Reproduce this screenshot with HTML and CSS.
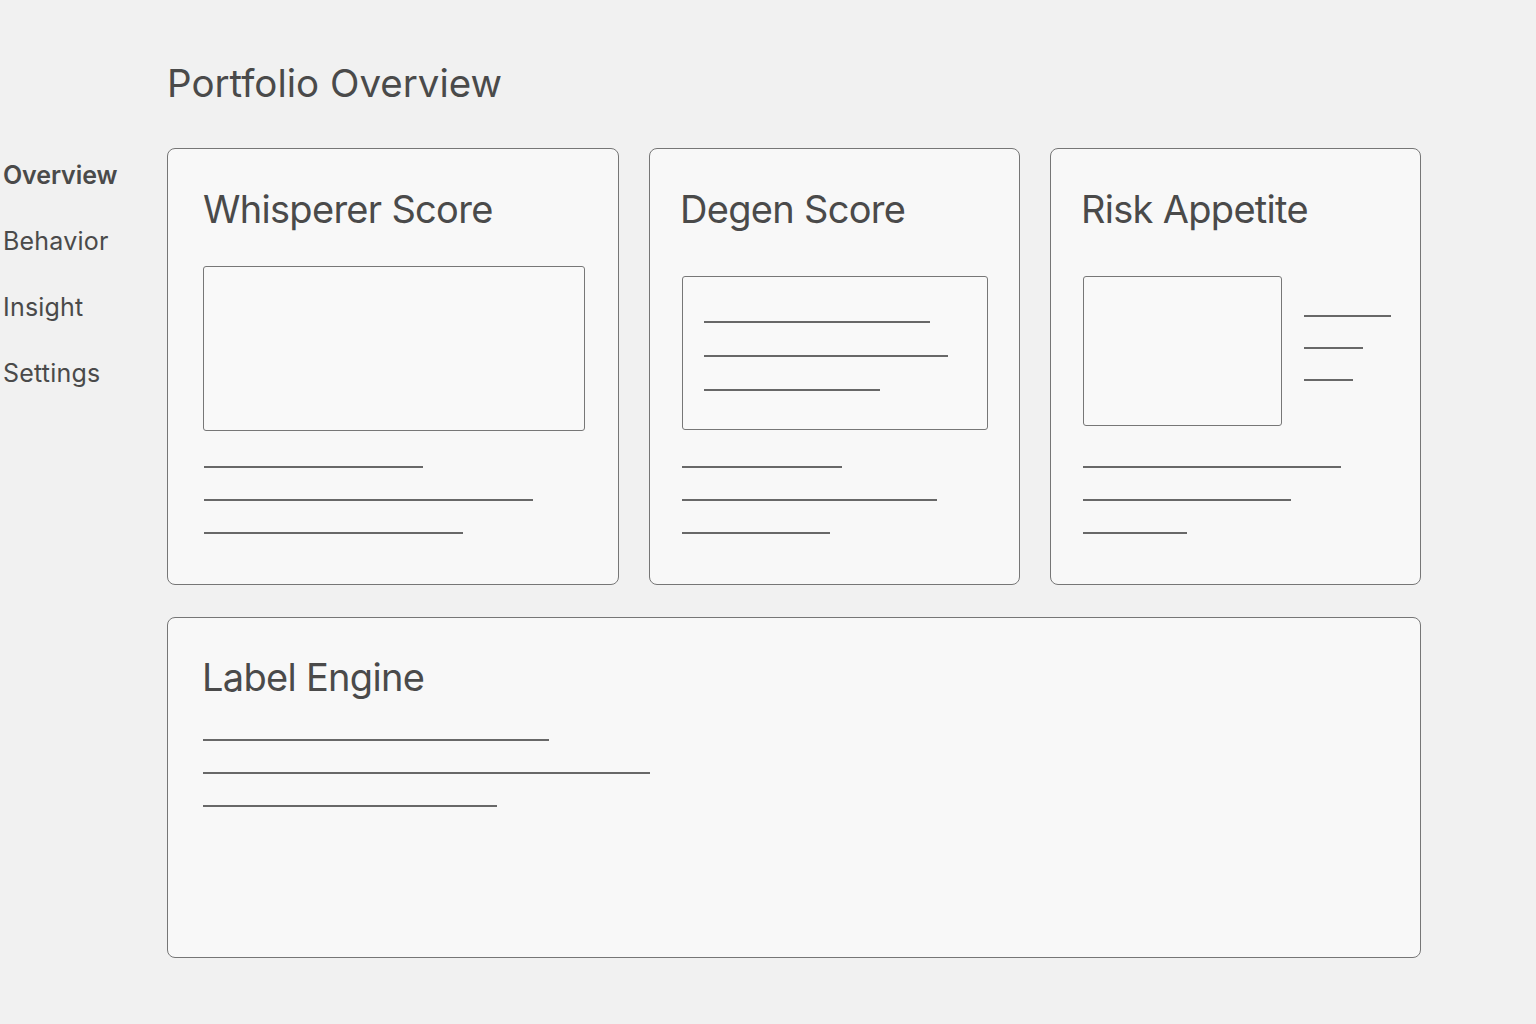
FILE: index.html
```html
<!DOCTYPE html>
<html lang="en">
<head>
<meta charset="utf-8">
<title>Portfolio Overview</title>
<link rel="stylesheet" href="styles.css">
</head>
<body>
<div class="page">
  <nav class="sidebar">
    <a class="nav-item active">Overview</a>
    <a class="nav-item">Behavior</a>
    <a class="nav-item">Insight</a>
    <a class="nav-item">Settings</a>
  </nav>
  <main class="main">
    <h1 class="page-title">Portfolio Overview</h1>
    <div class="card-row">
      <section class="card card-whisperer">
        <h2 class="card-title">Whisperer Score</h2>
        <div class="frame frame-whisperer"></div>
        <div class="lines lines-below">
          <span class="line" style="width:219px"></span>
          <span class="line" style="width:329px"></span>
          <span class="line" style="width:259px"></span>
        </div>
      </section>
      <section class="card card-degen">
        <h2 class="card-title">Degen Score</h2>
        <div class="frame frame-degen">
          <div class="lines lines-inner">
            <span class="line" style="width:226px"></span>
            <span class="line" style="width:244px"></span>
            <span class="line" style="width:176px"></span>
          </div>
        </div>
        <div class="lines lines-below">
          <span class="line" style="width:160px"></span>
          <span class="line" style="width:255px"></span>
          <span class="line" style="width:148px"></span>
        </div>
      </section>
      <section class="card card-risk">
        <h2 class="card-title">Risk Appetite</h2>
        <div class="risk-visual">
          <div class="frame frame-risk"></div>
          <div class="lines lines-side">
            <span class="line" style="width:87px"></span>
            <span class="line" style="width:59px"></span>
            <span class="line" style="width:49px"></span>
          </div>
        </div>
        <div class="lines lines-below">
          <span class="line" style="width:258px"></span>
          <span class="line" style="width:208px"></span>
          <span class="line" style="width:104px"></span>
        </div>
      </section>
    </div>
    <section class="card card-wide">
      <h2 class="card-title">Label Engine</h2>
      <div class="lines lines-label">
        <span class="line" style="width:346px"></span>
        <span class="line" style="width:447px"></span>
        <span class="line" style="width:294px"></span>
      </div>
    </section>
  </main>
</div>
</body>
</html>
```

FILE: styles.css
```css
* { box-sizing: border-box; }

html, body {
  margin: 0;
  padding: 0;
}

body {
  background: #f1f1f1;
  font-family: Inter, "Noto Sans", "Liberation Sans", sans-serif;
  color: #4a4a4a;
  width: 1536px;
  height: 1024px;
  overflow: hidden;
}

.page {
  display: flex;
  align-items: flex-start;
}

.sidebar {
  width: 167px;
  flex: none;
  padding: 160px 0 0 3px;
  display: flex;
  flex-direction: column;
  gap: 36px;
}

.nav-item {
  display: block;
  font-size: 25px;
  line-height: 30px;
  color: #4a4a4a;
  font-weight: 400;
  letter-spacing: 0.2px;
}

.nav-item.active {
  font-weight: 600;
  letter-spacing: -0.1px;
}

.main {
  width: 1254px;
  flex: none;
  padding-top: 64px;
}

.page-title {
  margin: 0 0 46px 0;
  font-size: 38.5px;
  line-height: 38px;
  font-weight: 400;
  color: #4a4a4a;
}

.card-row {
  display: grid;
  grid-template-columns: 452px 371px 371px;
  gap: 30px;
  margin-bottom: 32px;
}

.card {
  background: #f8f8f8;
  border: 1.5px solid #767676;
  border-radius: 8px;
  height: 437px;
  padding: 41px 20px 0 31px;
}

.card-whisperer { padding-left: 35px; padding-right: 33px; }

.card-title {
  margin: 0;
  font-size: 38px;
  line-height: 38px;
  font-weight: 400;
  color: #4a4a4a;
  letter-spacing: -0.7px;
}

.card-degen .card-title,
.card-risk .card-title {
  margin-left: -1px;
}

.frame {
  border: 1.5px solid #777;
  border-radius: 3px;
  background: #f9f9f9;
}

.frame-whisperer {
  margin-top: 38px;
  height: 165px;
}

.frame-degen {
  margin-top: 48px;
  margin-left: 1px;
  width: 306px;
  height: 154px;
  padding: 44px 0 0 21px;
}

.risk-visual {
  margin-top: 48px;
  display: flex;
  align-items: flex-start;
}

.frame-risk {
  flex: none;
  margin-left: 1px;
  width: 199px;
  height: 150px;
}

.lines {
  display: flex;
  flex-direction: column;
  align-items: flex-start;
}

.line {
  display: block;
  flex: none;
  height: 2px;
  background: #686868;
}

.lines-below {
  gap: 31px;
  margin-left: 1px;
}

.card-whisperer .lines-below { margin-top: 35px; }
.card-degen .lines-below { margin-top: 36px; }
.card-risk .lines-below { margin-top: 40px; }

.lines-inner { gap: 32px; }

.lines-side {
  flex: none;
  margin: 39px 0 0 22px;
  gap: 30px;
}

.card-wide {
  height: 341px;
  padding-top: 40px;
  padding-left: 34px;
}

.lines-label {
  margin-top: 43px;
  margin-left: 1px;
  gap: 31px;
}
```
